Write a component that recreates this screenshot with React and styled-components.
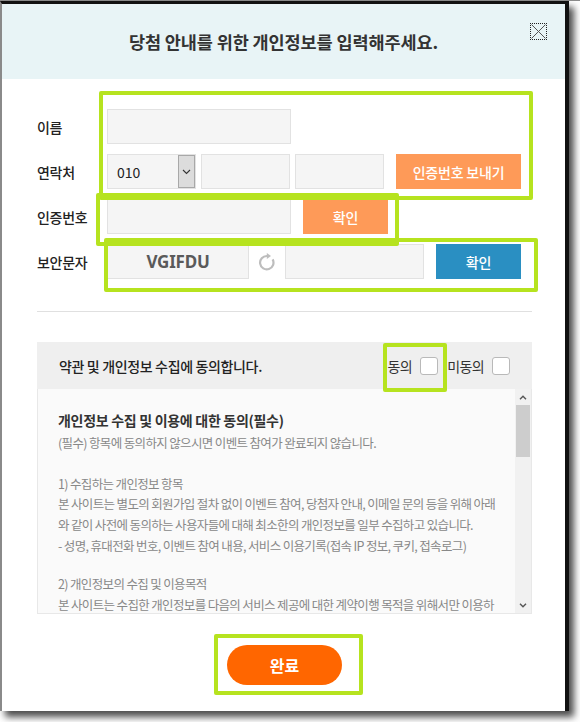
import React from "react";
import styled, { createGlobalStyle } from "styled-components";

const Global = createGlobalStyle`
  html, body { margin: 0; padding: 0; background: #fff; }
  body { font-family: "Noto Sans CJK KR", "Noto Sans", sans-serif; }
  * { box-sizing: border-box; }
`;

const FONT = `"Noto Sans CJK KR", "Noto Sans", sans-serif`;

const Stage = styled.div`
  position: relative;
  width: 580px;
  height: 722px;
  overflow: hidden;
  background: #fff;
  border-top: 1px solid #8a8a8a;
`;

const Window = styled.div`
  width: 569px;
  height: 710px;
  border-left: 2px solid #8a8a8a;
  border-top: 3px solid #111;
  border-right: 4px solid #111;
  background: #fff;
  display: flex;
  flex-direction: column;
  box-shadow: 5px 6px 7px rgba(0, 0, 0, 0.7);
`;

const Header = styled.div`
  height: 75px;
  flex: none;
  background: #e8f4f6;
  display: grid;
  grid-template-columns: 1fr auto 1fr;
  align-items: center;
`;

const Title = styled.h1`
  grid-column: 2;
  margin: 0;
  font-family: ${FONT};
  font-size: 17.5px;
  font-weight: 700;
  color: #333;
  letter-spacing: -0.1px;
`;

const Close = styled.button`
  grid-column: 3;
  justify-self: end;
  align-self: start;
  margin: 19px 18px 0 0;
  width: 17px;
  height: 17px;
  padding: 0;
  border: 1px dotted #222;
  background: transparent;
  display: flex;
  align-items: center;
  justify-content: center;
`;

const Body = styled.div`
  flex: 1;
  display: flex;
  flex-direction: column;
  padding: 30px 33px 0 35px;
`;

const Form = styled.div`
  display: flex;
  flex-direction: column;
  gap: 10px;
`;

const Row = styled.div`
  display: flex;
  align-items: center;
  height: 35px;
`;

const Label = styled.div`
  width: 70px;
  flex: none;
  font-family: ${FONT};
  font-size: 14px;
  font-weight: 500;
  color: #222;
  letter-spacing: -0.3px;
`;

const Field = styled.div`
  width: ${(p) => p.$w}px;
  height: 35px;
  flex: none;
  margin-left: ${(p) => p.$ml || 0}px;
  background: #f5f5f5;
  border: 1px solid #e2e2e2;
`;

const Select = styled.div`
  width: 89px;
  height: 35px;
  flex: none;
  background: #f5f5f5;
  border: 1px solid #e2e2e2;
  display: flex;
  align-items: stretch;
`;

const SelectValue = styled.span`
  flex: 1;
  display: flex;
  align-items: center;
  padding-left: 9px;
  font-family: ${FONT};
  font-size: 14px;
  color: #222;
`;

const SelectArrow = styled.span`
  width: 17px;
  background: #dcdcdc;
  border: 1px solid #a8a8a8;
  display: flex;
  align-items: center;
  justify-content: center;
`;

const Btn = styled.button`
  width: ${(p) => p.$w}px;
  height: 35px;
  flex: none;
  margin-left: ${(p) => p.$ml || 0}px;
  border: 0;
  padding: 0;
  background: ${(p) => (p.$blue ? "#2a8fc2" : "#fe9a58")};
  color: #fff;
  font-family: ${FONT};
  font-size: 14px;
  font-weight: 500;
  letter-spacing: -0.2px;
`;

const Captcha = styled.div`
  width: 142px;
  height: 35px;
  flex: none;
  background: #f5f5f5;
  border: 1px solid #e2e2e2;
  display: flex;
  align-items: center;
  justify-content: center;
  font-family: "Noto Sans", ${FONT};
  font-size: 17px;
  font-weight: 700;
  color: #5a5a5a;
  letter-spacing: -0.2px;
`;

const Refresh = styled.div`
  width: 36px;
  flex: none;
  display: flex;
  justify-content: center;
  align-items: center;
`;

const Divider = styled.hr`
  margin: 32px 0 30px;
  border: 0;
  border-top: 1px solid #e0e0e0;
  height: 0;
`;

const Agree = styled.div`
  display: flex;
  flex-direction: column;
`;

const AgreeHead = styled.div`
  height: 47px;
  background: #efefef;
  display: flex;
  align-items: center;
  padding: 0 22px;
`;

const AgreeTitle = styled.div`
  flex: 1;
  font-family: ${FONT};
  font-size: 14px;
  font-weight: 500;
  color: #222;
  letter-spacing: -0.35px;
`;

const CheckLabel = styled.span`
  font-family: ${FONT};
  font-size: 14px;
  color: #333;
  margin-left: ${(p) => p.$ml || 0}px;
  letter-spacing: -0.6px;
`;

const Check = styled.span`
  width: 18px;
  height: 18px;
  margin-left: 8px;
  background: #fff;
  border: 1px solid #b9b9b9;
  border-radius: 3px;
`;

const AgreeBox = styled.div`
  height: 225px;
  background: #fafafa;
  border: 1px solid #e8e8e8;
  border-top: 0;
  display: flex;
`;

const Terms = styled.div`
  flex: 1;
  overflow: hidden;
  padding: 19px 0 0 20px;
`;

const TermsTitle = styled.div`
  font-family: ${FONT};
  font-size: 14px;
  font-weight: 700;
  color: #333;
  line-height: 25px;
  letter-spacing: -0.3px;
`;

const Para = styled.div`
  margin-top: ${(p) => p.$mt || 0}px;
`;

const Line = styled.div`
  font-family: ${FONT};
  font-size: 12.5px;
  color: #888;
  line-height: 20.7px;
  height: 20.7px;
  white-space: nowrap;
  letter-spacing: -0.65px;
`;

const Scrollbar = styled.div`
  width: 16px;
  flex: none;
  background: #f1f1f1;
  display: flex;
  flex-direction: column;
`;

const ScrollArrow = styled.div`
  height: 16px;
  flex: none;
  display: flex;
  align-items: center;
  justify-content: center;
`;

const Thumb = styled.div`
  height: 52px;
  margin: 0 1px;
  background: #cdcdcd;
`;

const Spacer = styled.div`
  flex: 1;
`;

const Footer = styled.div`
  display: flex;
  justify-content: center;
  padding: 31px 0 26px;
`;

const Submit = styled.button`
  width: 115px;
  height: 40px;
  border: 0;
  border-radius: 20px;
  background: #ff6600;
  color: #fff;
  font-family: ${FONT};
  font-size: 16px;
  font-weight: 700;
`;

const Mark = styled.div`
  position: absolute;
  left: ${(p) => p.$x}px;
  top: ${(p) => p.$y}px;
  width: ${(p) => p.$w}px;
  height: ${(p) => p.$h}px;
  border: 4px solid #b6e31f;
  border-radius: 2px;
  pointer-events: none;
`;

const paras = [
  { mt: 0, lines: ["(필수) 항목에 동의하지 않으시면 이벤트 참여가 완료되지 않습니다."] },
  {
    mt: 20,
    lines: [
      "1) 수집하는 개인정보 항목",
      "본 사이트는 별도의 회원가입 절차 없이 이벤트 참여, 당첨자 안내, 이메일 문의 등을 위해 아래",
      "와 같이 사전에 동의하는 사용자들에 대해 최소한의 개인정보를 일부 수집하고 있습니다.",
      "- 성명, 휴대전화 번호, 이벤트 참여 내용, 서비스 이용기록(접속 IP 정보, 쿠키, 접속로그)",
    ],
  },
  {
    mt: 18,
    lines: [
      "2) 개인정보의 수집 및 이용목적",
      "본 사이트는 수집한 개인정보를 다음의 서비스 제공에 대한 계약이행 목적을 위해서만 이용하",
    ],
  },
];

export default function App() {
  return (
    <Stage>
      <Global />
      <Window>
        <Header>
          <Title>당첨 안내를 위한 개인정보를 입력해주세요.</Title>
          <Close aria-label="닫기">
            <svg width="15" height="15" viewBox="0 0 15 15">
              <path d="M0.5 0.5 L14.5 14.5 M14.5 0.5 L0.5 14.5" stroke="#555" strokeWidth="1" fill="none" />
            </svg>
          </Close>
        </Header>
        <Body>
          <Form>
            <Row>
              <Label>이름</Label>
              <Field $w={184} />
            </Row>
            <Row>
              <Label>연락처</Label>
              <Select>
                <SelectValue>010</SelectValue>
                <SelectArrow>
                  <svg width="9" height="6" viewBox="0 0 9 6">
                    <path d="M1 1 L4.5 4.5 L8 1" stroke="#333" strokeWidth="1.1" fill="none" />
                  </svg>
                </SelectArrow>
              </Select>
              <Field $w={89} $ml={5} />
              <Field $w={89} $ml={5} />
              <Btn $w={125} $ml={12}>인증번호 보내기</Btn>
            </Row>
            <Row>
              <Label>인증번호</Label>
              <Field $w={184} />
              <Btn $w={85} $ml={12}>확인</Btn>
            </Row>
            <Row>
              <Label>보안문자</Label>
              <Captcha>VGIFDU</Captcha>
              <Refresh>
                <svg width="18" height="18" viewBox="0 0 18 18">
                  <path d="M14.6 6.4 A6.7 6.7 0 1 1 9 3" stroke="#bdbdbd" strokeWidth="2.2" fill="none" />
                  <path d="M8.8 0 L13 3 L8.8 6 Z" fill="#bdbdbd" />
                </svg>
              </Refresh>
              <Field $w={139} />
              <Btn $w={85} $ml={12} $blue>확인</Btn>
            </Row>
          </Form>
          <Divider />
          <Agree>
            <AgreeHead>
              <AgreeTitle>약관 및 개인정보 수집에 동의합니다.</AgreeTitle>
              <CheckLabel>동의</CheckLabel>
              <Check />
              <CheckLabel $ml={9}>미동의</CheckLabel>
              <Check />
            </AgreeHead>
            <AgreeBox>
              <Terms>
                <TermsTitle>개인정보 수집 및 이용에 대한 동의(필수)</TermsTitle>
                {paras.map((p, i) => (
                  <Para key={i} $mt={p.mt}>
                    {p.lines.map((t, j) => (
                      <Line key={j}>{t}</Line>
                    ))}
                  </Para>
                ))}
              </Terms>
              <Scrollbar>
                <ScrollArrow>
                  <svg width="8" height="5" viewBox="0 0 8 5">
                    <path d="M1 4.2 L4 1.2 L7 4.2" stroke="#555" strokeWidth="1.4" fill="none" />
                  </svg>
                </ScrollArrow>
                <Thumb />
                <Spacer />
                <ScrollArrow>
                  <svg width="8" height="5" viewBox="0 0 8 5">
                    <path d="M1 0.8 L4 3.8 L7 0.8" stroke="#555" strokeWidth="1.4" fill="none" />
                  </svg>
                </ScrollArrow>
              </Scrollbar>
            </AgreeBox>
          </Agree>
          <Footer>
            <Submit>완료</Submit>
          </Footer>
        </Body>
      </Window>
      <Mark $x={99} $y={90} $w={434} $h={109} />
      <Mark $x={96} $y={192} $w={303} $h={53} />
      <Mark $x={104} $y={237} $w={434} $h={54} />
      <Mark $x={383} $y={342} $w={64} $h={49} />
      <Mark $x={214} $y={633} $w={149} $h={61} />
    </Stage>
  );
}
